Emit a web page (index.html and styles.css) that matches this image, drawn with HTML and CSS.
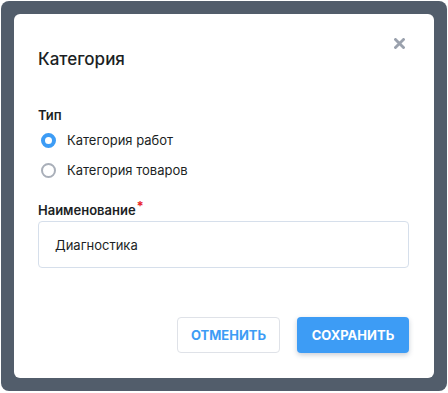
FILE: index.html
```html
<!DOCTYPE html>
<html lang="ru">
<head>
  <meta charset="UTF-8">
  <title>Категория</title>
  <link rel="stylesheet" href="styles.css">
</head>
<body>
  <div class="overlay">
    <div class="modal">
      <div class="modal-header">
        <h2>Категория</h2>
        <button class="close-btn">
          <svg width="11" height="11" viewBox="0 0 11 11"><path d="M1.5 1.5L9.5 9.5M9.5 1.5L1.5 9.5" stroke="#9aa1ad" stroke-width="2.8" stroke-linecap="square"/></svg>
        </button>
      </div>
      <div class="field">
        <div class="label">Тип</div>
        <label class="radio checked"><span class="dot"></span>Категория работ</label>
        <label class="radio"><span class="dot"></span>Категория товаров</label>
      </div>
      <div class="field">
        <div class="label label-tight">Наименование<span class="req">*</span></div>
        <div class="input">Диагностика</div>
      </div>
      <div class="actions">
        <button class="btn btn-outline">Отменить</button>
        <button class="btn btn-primary">Сохранить</button>
      </div>
    </div>
  </div>
</body>
</html>
```

FILE: styles.css
```css
body, html {
  margin: 0;
  padding: 0;
  font-family: Inter, "Noto Sans", sans-serif;
  color: #1c1f24;
  background: #fff;
}

.overlay {
  margin: 1px 1px 0 1px;
  height: 364px;
  background-color: #525d6b;
  border-radius: 8px;
  padding: 13px;
}

.modal {
  background-color: #fff;
  border-radius: 6px;
  height: 364px;
  padding: 0 25px 0 24px;
  box-sizing: border-box;
  display: flex;
  flex-direction: column;
}

.modal-header {
  display: flex;
  justify-content: space-between;
  align-items: flex-start;
  padding-top: 34px;
  margin-bottom: 36px;
}

.modal-header h2 {
  margin: 0;
  font-size: 17px;
  font-weight: 500;
  line-height: 22px;
}

.close-btn {
  background: none;
  border: none;
  padding: 0;
  margin-top: -10px;
  margin-right: 4px;
  line-height: 0;
  cursor: pointer;
}

.field {
  margin-bottom: 12px;
}

.label {
  font-size: 13px;
  font-weight: 600;
  line-height: 18px;
  margin-bottom: 5px;
}

.label-tight {
  margin-bottom: 2px;
}

.req {
  color: #e8262b;
  font-weight: 700;
  position: relative;
  top: -4px;
  margin-left: 1px;
}

.radio {
  display: flex;
  align-items: center;
  font-size: 13px;
  height: 22px;
  margin-bottom: 8px;
}

.radio .dot {
  width: 15px;
  height: 15px;
  box-sizing: border-box;
  border: 2px solid #a9afb9;
  border-radius: 50%;
  margin: 0 11px 0 3px;
}

.radio.checked .dot {
  border: 4.5px solid #3d9cf5;
}

.input {
  height: 47px;
  box-sizing: border-box;
  border: 1px solid #d6dfeb;
  border-radius: 4px;
  padding: 0 16px;
  display: flex;
  align-items: center;
  font-size: 13px;
}

.actions {
  margin-top: auto;
  margin-bottom: 25px;
  display: flex;
  justify-content: flex-end;
  gap: 17px;
}

.btn {
  height: 36px;
  border-radius: 4px;
  font-family: inherit;
  font-size: 13px;
  font-weight: 700;
  text-transform: uppercase;
  cursor: pointer;
}

.btn-outline {
  width: 103px;
  background: #fff;
  border: 1px solid #dfe2e8;
  color: #3d9cf5;
}

.btn-primary {
  width: 112px;
  background: #3d9cf5;
  border: none;
  color: #fff;
  box-shadow: 0 2px 5px rgba(40, 60, 90, 0.25);
}
```
